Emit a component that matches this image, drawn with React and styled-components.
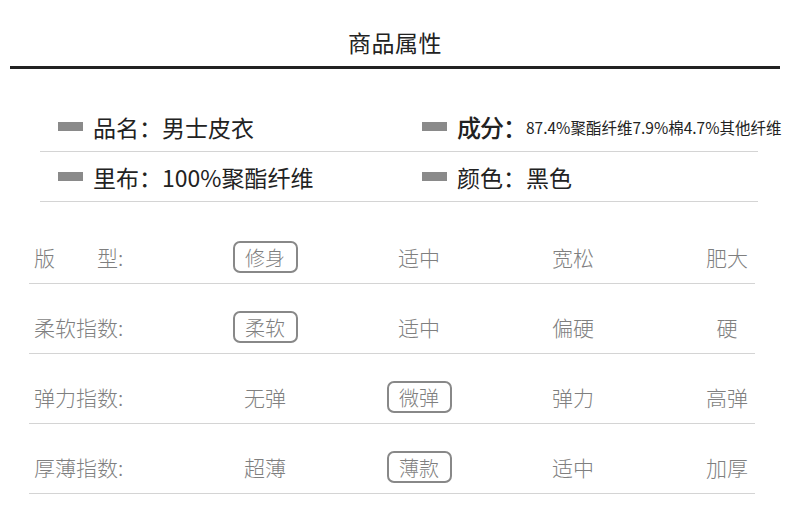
import React from "react";
import styled, { createGlobalStyle } from "styled-components";

const Global = createGlobalStyle`
  html, body { margin: 0; padding: 0; background: #fff; }
  body { font-family: "Noto Sans CJK SC", "Noto Sans", sans-serif; width: 790px; overflow: hidden; }
`;

const Page = styled.div`
  width: 790px;
  height: 517px;
  display: flex;
  flex-direction: column;
  background: #fff;
`;

const Header = styled.header`
  display: flex;
  flex-direction: column;
  align-items: center;
  padding-top: 27px;
`;

const Title = styled.h1`
  margin: 0;
  font-size: 23px;
  line-height: 30px;
  font-weight: 400;
  color: #222;
  letter-spacing: 0.5px;
`;

const Rule = styled.div`
  align-self: stretch;
  margin: 9px 10px 0 10px;
  height: 3px;
  background: #222;
`;

const Info = styled.section`
  margin: 33px 32px 0 40px;
  display: flex;
  flex-direction: column;
`;

const InfoRow = styled.div`
  display: grid;
  grid-template-columns: 364px 1fr;
  height: 50px;
  border-bottom: 1px solid #d4d4d4;
  box-sizing: border-box;
`;

const InfoCell = styled.div`
  display: flex;
  align-items: center;
  padding-left: 18px;
  white-space: nowrap;
  color: #222;
  font-size: 23px;
`;

const Marker = styled.span`
  width: 25px;
  height: 9px;
  background: #8a8a8a;
  margin-right: 10px;
  flex: none;
`;

const Key = styled.span`
  font-size: ${(p) => (p.$big ? "24px" : "23px")};
  font-weight: ${(p) => (p.$big ? 500 : 400)};
  letter-spacing: ${(p) => (p.$big ? "-1px" : "0")};
`;

const Val = styled.span`
  font-size: ${(p) => (p.$small ? "15.5px" : "23px")};
`;

const Table = styled.section`
  margin: 12px 35px 0 29px;
  display: flex;
  flex-direction: column;
`;

const Row = styled.div`
  display: grid;
  grid-template-columns: 159px repeat(4, 154px);
  height: 70px;
  padding-top: 17px;
  box-sizing: border-box;
  align-items: center;
  border-bottom: 1px solid #d4d4d4;
  color: #7f7f7f;
  font-size: 21px;
  font-weight: 300;
`;

const Label = styled.div`
  padding-left: 5px;
  white-space: pre;
`;

const Opt = styled.div`
  justify-self: center;
  white-space: nowrap;
  display: flex;
  align-items: center;
  justify-content: center;
  box-sizing: border-box;
  ${(p) =>
    p.$on &&
    `
    width: 65px;
    height: 32px;
    border: 2px solid #888;
    border-radius: 7px;
    font-size: 20px;
  `}
`;

const info = [
  [
    { k: "品名：", v: "男士皮衣" },
    { k: "成分：", v: "87.4%聚酯纤维7.9%棉4.7%其他纤维", big: true, small: true },
  ],
  [
    { k: "里布：", v: "100%聚酯纤维" },
    { k: "颜色：", v: "黑色" },
  ],
];

const rows = [
  { label: "版　　型:", opts: ["修身", "适中", "宽松", "肥大"], on: 0 },
  { label: "柔软指数:", opts: ["柔软", "适中", "偏硬", "硬"], on: 0 },
  { label: "弹力指数:", opts: ["无弹", "微弹", "弹力", "高弹"], on: 1 },
  { label: "厚薄指数:", opts: ["超薄", "薄款", "适中", "加厚"], on: 1 },
];

export default function App() {
  return (
    <Page>
      <Global />
      <Header>
        <Title>商品属性</Title>
        <Rule />
      </Header>
      <Info>
        {info.map((r, i) => (
          <InfoRow key={i}>
            {r.map((c) => (
              <InfoCell key={c.k}>
                <Marker />
                <Key $big={c.big}>{c.k}</Key>
                <Val $small={c.small}>{c.v}</Val>
              </InfoCell>
            ))}
          </InfoRow>
        ))}
      </Info>
      <Table>
        {rows.map((r) => (
          <Row key={r.label}>
            <Label>{r.label}</Label>
            {r.opts.map((o, j) => (
              <Opt key={j} $on={j === r.on}>
                {o}
              </Opt>
            ))}
          </Row>
        ))}
      </Table>
    </Page>
  );
}
